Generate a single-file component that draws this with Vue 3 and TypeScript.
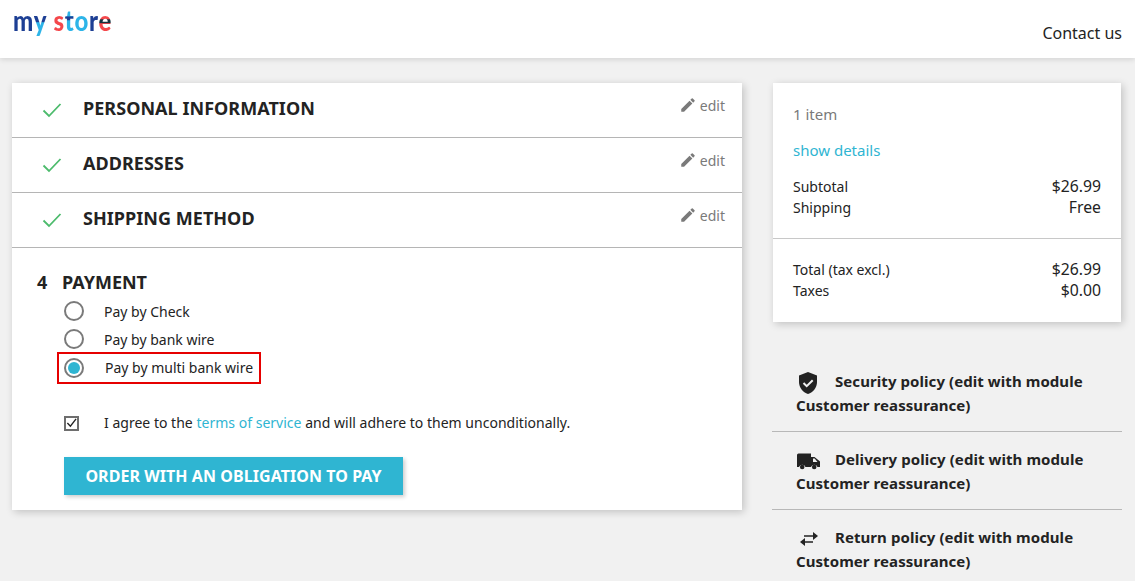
<template>
  <div class="page">
    <header class="site-header">
      <a class="logo" href="#">
        <span class="ltr l-m">m</span><span class="ltr l-y">y</span>{{ ' ' }}<span class="ltr l-s">s</span><span class="ltr l-t">t</span><span class="ltr l-o">o</span><span class="ltr l-r">r</span><span class="ltr l-e">e</span>
      </a>
      <a class="contact" href="#">Contact us</a>
    </header>

    <main class="checkout">
      <section class="steps">
        <div v-for="step in doneSteps" :key="step" class="step-done">
          <svg class="check" width="20" height="16" viewBox="0 0 20 16" fill="none">
            <path d="M1.500 8.500 L7 14 L18.500 2" stroke="#4cbb6c" stroke-width="1.800" />
          </svg>
          <h2>{{ step }}</h2>
          <span class="edit">
            <svg width="18" height="18" viewBox="0 0 24 24" fill="#7a7a7a">
              <path d="M3 17.250V21h3.750L17.810 9.940l-3.750-3.750L3 17.250zM20.710 7.040a1 1 0 0 0 0-1.410l-2.340-2.340a1 1 0 0 0-1.410 0l-1.830 1.830 3.750 3.750 1.830-1.830z" />
            </svg>
            edit
          </span>
        </div>

        <div class="step-current">
          <h2 class="payment-title"><span class="step-num">4</span>PAYMENT</h2>
          <div class="options">
            <label
              v-for="(option, i) in payOptions"
              :key="option"
              class="option"
              :class="{ 'option--selected': i === selected }"
            >
              <span class="radio" :class="{ 'radio--on': i === selected }"></span>
              <span class="option-text">{{ option }}</span>
            </label>
          </div>
          <div class="terms">
            <span class="checkbox">
              <svg width="12" height="12" viewBox="0 0 12 12" fill="none">
                <path d="M1.500 6 L4.800 9.500 L11 1.500" stroke="#232323" stroke-width="1.500" />
              </svg>
            </span>
            <span>I agree to the <a href="#">terms of service</a> and will adhere to them unconditionally.</span>
          </div>
          <button type="button" class="order-btn">ORDER WITH AN OBLIGATION TO PAY</button>
        </div>
      </section>

      <aside class="side">
        <div class="summary">
          <p class="count">1 item</p>
          <a class="details" href="#">show details</a>
          <div class="lines lines--top">
            <div v-for="line in subLines" :key="line[0]" class="line">
              <span>{{ line[0] }}</span><span>{{ line[1] }}</span>
            </div>
          </div>
          <div class="lines lines--bottom">
            <div v-for="line in totalLines" :key="line[0]" class="line">
              <span>{{ line[0] }}</span><span>{{ line[1] }}</span>
            </div>
          </div>
        </div>

        <ul class="reassurance">
          <li>
            <svg class="re-icon" width="24" height="24" viewBox="0 0 24 24">
              <path fill="#232323" d="M12 1 3 4.500v6.600c0 5.500 3.800 10.400 9 11.900 5.200-1.500 9-6.400 9-11.900V4.500L12 1z" />
              <path fill="none" stroke="#f1f1f1" stroke-width="2" d="M7.500 12l3.200 3.200 6-6" />
            </svg>
            <span>Security policy (edit with module Customer reassurance)</span>
          </li>
          <li>
            <svg class="re-icon" width="24" height="24" viewBox="0 0 24 24">
              <path fill="#232323" d="M1 6A1.500 1.500 0 0 1 2.500 4.500H15V8h3.500L24 12.500V18h-2.500a3.500 3.500 0 0 0-6.500 0H9.500a3.500 3.500 0 0 0-6.500 0H1V6zM17 9.500V13h4.500l-2.800-3.500H17z" />
              <circle cx="6.200" cy="18" r="2.300" fill="#232323" />
              <circle cx="18.200" cy="18" r="2.300" fill="#232323" />
            </svg>
            <span>Delivery policy (edit with module Customer reassurance)</span>
          </li>
          <li>
            <svg class="re-icon" width="24" height="24" viewBox="0 0 24 24">
              <path fill="#232323" d="M8 8.200h9V5l5 4-5 4V9.800H8zM17 14.200H9V11l-5 4 5 4v-3.200h8z" />
            </svg>
            <span>Return policy (edit with module Customer reassurance)</span>
          </li>
        </ul>
      </aside>
    </main>
  </div>
</template>

<script setup lang="ts">
const doneSteps = ['PERSONAL INFORMATION', 'ADDRESSES', 'SHIPPING METHOD']
const payOptions = ['Pay by Check', 'Pay by bank wire', 'Pay by multi bank wire']
const selected = 2
const subLines = [
  ['Subtotal', '$26.99'],
  ['Shipping', 'Free'],
]
const totalLines = [
  ['Total (tax excl.)', '$26.99'],
  ['Taxes', '$0.00'],
]
</script>

<style>
html,
body {
  margin: 0;
  background: #f1f1f1;
  overflow: hidden;
}
</style>

<style scoped>
.page {
  height: 581px;
  overflow: hidden;
  font-family: 'Noto Sans', sans-serif;
  font-size: 14px;
  color: #232323;
}

.site-header {
  height: 58px;
  background: #fff;
  box-shadow: 0 2px 5px rgba(0, 0, 0, 0.11);
  display: flex;
  justify-content: space-between;
  padding: 0 13px;
  position: relative;
}

.logo {
  display: block;
  font-family: 'Lato', sans-serif;
  font-weight: 900;
  font-size: 24px;
  line-height: 28px;
  margin-top: 7px;
  height: 30px;
  text-decoration: none;
  letter-spacing: 0.6px;
  white-space: nowrap;
  transform: scaleY(1.18);
  transform-origin: 0 60%;
}

.ltr {
  display: inline-block;
  background-clip: text;
  -webkit-background-clip: text;
  color: transparent;
}

.l-m { background-image: linear-gradient(#c25bb8 0 30%, #1d3f94 30%); }
.l-y { background-image: linear-gradient(#1d3f94 0 55%, #2db4e8 55%); }
.l-s { background-image: linear-gradient(#f4474b, #f4474b); }
.l-t { background-image: linear-gradient(#2db4e8 0 38%, #1d3f94 38% 50%, #2db4e8 50%); }
.l-o { background-image: linear-gradient(#2db4e8, #2db4e8); }
.l-r { background-image: linear-gradient(#1d3f94, #1d3f94); }
.l-e { background-image: linear-gradient(#f4474b 0 47%, #14323f 47% 60%, #f4474b 60%); }

.contact {
  margin-top: 23px;
  font-size: 16px;
  line-height: 20px;
  color: #232323;
  text-decoration: none;
}

.checkout {
  display: flex;
  align-items: flex-start;
  gap: 31px;
  padding: 25px 14px 0 12px;
}

.steps {
  width: 730px;
  flex-shrink: 0;
  background: #fff;
  box-shadow: 2px 2px 8px rgba(0, 0, 0, 0.2);
}

.step-done {
  height: 54px;
  border-bottom: 1px solid #b5b5b5;
  display: flex;
  align-items: center;
  padding: 0 17px 0 30px;
}

.check {
  margin-right: 21px;
}

.step-done h2 {
  flex: 1;
  margin: 0 0 5px;
  font-size: 18px;
  font-weight: 700;
  line-height: 24px;
  letter-spacing: 0.04px;
}

.edit {
  display: flex;
  align-items: center;
  gap: 3px;
  margin-bottom: 10px;
  color: #7a7a7a;
  font-size: 14px;
}

.step-current {
  padding: 22px 0 15px 25px;
}

.payment-title {
  margin: 0;
  font-size: 18px;
  font-weight: 700;
  line-height: 24px;
}

.step-num {
  display: inline-block;
  width: 25px;
}

.options {
  margin-top: 3px;
  margin-left: 20px;
}

.option {
  display: flex;
  align-items: center;
  width: 204px;
  height: 28px;
  box-sizing: border-box;
  font-size: 14px;
  padding-left: 5px;
  border: 2px solid transparent;
}

.option--selected {
  height: 32px;
  margin-top: -1px;
  border-color: #e60000;
}

.option--selected .radio {
  margin-right: 21px;
}

.option--selected .option-text {
  padding-bottom: 2px;
}

.radio {
  width: 20px;
  height: 20px;
  box-sizing: border-box;
  border: 2px solid #7a7a7a;
  border-radius: 50%;
  margin-right: 20px;
  flex-shrink: 0;
  position: relative;
}

.radio--on::after {
  content: '';
  position: absolute;
  inset: 2px;
  border-radius: 50%;
  background: #2fb5d2;
}

.terms {
  display: flex;
  align-items: center;
  margin: 27px 0 0 27px;
  font-size: 14px;
  line-height: 24px;
  letter-spacing: 0.016px;
}

.terms a {
  color: #2fb5d2;
  text-decoration: none;
}

.checkbox {
  width: 15px;
  height: 15px;
  box-sizing: border-box;
  border: 2px solid #6e6e6e;
  display: flex;
  align-items: center;
  justify-content: center;
  margin-right: 25px;
}

.order-btn {
  display: block;
  margin: 22px 0 0 27px;
  width: 339px;
  height: 38px;
  padding: 0;
  border: none;
  background: #2fb5d2;
  color: #fff;
  font-family: inherit;
  font-size: 16px;
  font-weight: 700;
  letter-spacing: 0.06px;
  box-shadow: 2px 2px 4px rgba(0, 0, 0, 0.2);
}

.side {
  width: 348px;
  flex-shrink: 0;
}

.summary {
  background: #fff;
  box-shadow: 2px 2px 8px rgba(0, 0, 0, 0.2);
  padding-top: 21px;
}

.count {
  margin: 0 20px;
  line-height: 20px;
  font-size: 15px;
  color: #7a7a7a;
}

.details {
  display: block;
  margin: 16px 20px 0;
  line-height: 20px;
  color: #2fb5d2;
  text-decoration: none;
  font-size: 15px;
}

.lines {
  padding: 0 20px;
  line-height: 21px;
}

.lines--top {
  margin-top: 16px;
  padding-bottom: 20px;
  border-bottom: 1px solid #c8c8c8;
}

.lines--bottom {
  padding-top: 20px;
  padding-bottom: 21px;
}

.line {
  display: flex;
  justify-content: space-between;
}

.line span:last-child {
  font-size: 15.75px;
}

.reassurance {
  list-style: none;
  margin: 32px -1px 0;
  padding: 0;
}

.reassurance li {
  padding: 15px 24px 14px;
  font-size: 15px;
  font-weight: 700;
  line-height: 24px;
  letter-spacing: 0.07px;
  border-bottom: 1px solid #b8b8b8;
}

.reassurance li:last-child {
  border-bottom: none;
}

.re-icon {
  vertical-align: middle;
  margin: -4px 15px -4px 0;
}
</style>
